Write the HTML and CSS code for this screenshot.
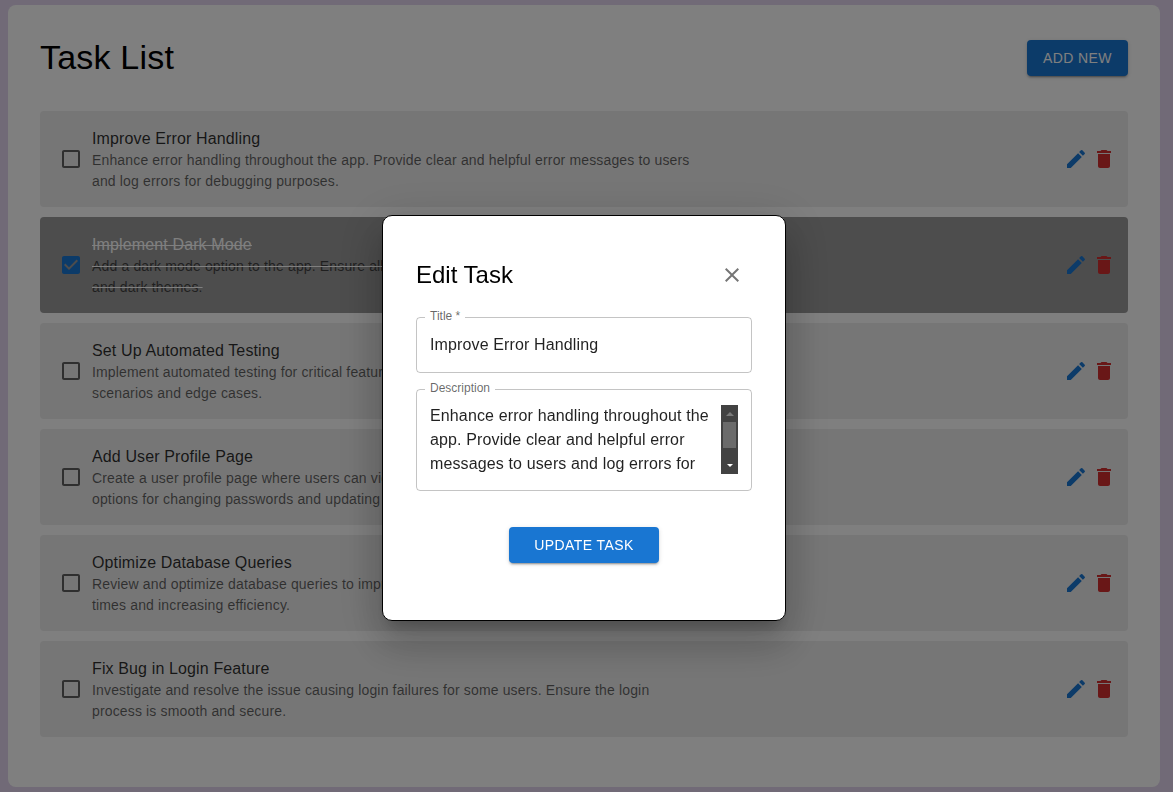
FILE: index.html
```html
<!DOCTYPE html>
<html lang="en">
<head>
<meta charset="utf-8">
<title>Task List</title>
<link rel="stylesheet" href="styles.css">
</head>
<body>
<main class="card">
  <header class="page-header">
    <h1 class="page-title">Task List</h1>
    <button class="btn btn-add" type="button">ADD NEW</button>
  </header>
  <ul class="task-list">
    <li class="task">
      <svg class="icon check" viewBox="0 0 24 24"><path d="M19 5v14H5V5h14m0-2H5c-1.1 0-2 .9-2 2v14c0 1.1.9 2 2 2h14c1.1 0 2-.9 2-2V5c0-1.1-.9-2-2-2z"/></svg>
      <div class="task-text">
        <div class="task-title">Improve Error Handling</div>
        <p class="task-desc">Enhance error handling throughout the app. Provide clear and helpful error messages to users and log errors for debugging purposes.</p>
      </div>
      <div class="task-actions">
        <svg class="icon edit" viewBox="0 0 24 24"><path d="M3 17.25V21h3.75L17.81 9.94l-3.75-3.75L3 17.25zM20.71 7.04c.39-.39.39-1.02 0-1.41l-2.34-2.34a.9959.9959 0 0 0-1.41 0l-1.83 1.83 3.75 3.75 1.83-1.83z"/></svg>
        <svg class="icon del" viewBox="0 0 24 24"><path d="M6 19c0 1.1.9 2 2 2h8c1.1 0 2-.9 2-2V7H6v12zM19 4h-3.5l-1-1h-5l-1 1H5v2h14V4z"/></svg>
      </div>
    </li>
    <li class="task task-done">
      <svg class="icon check check-on" viewBox="0 0 24 24"><path d="M19 3H5c-1.11 0-2 .9-2 2v14c0 1.1.89 2 2 2h14c1.11 0 2-.89 2-2V5c0-1.1-.89-2-2-2zm-9 14l-5-5 1.41-1.41L10 14.17l7.59-7.59L19 8l-9 9z"/></svg>
      <div class="task-text">
        <div class="task-title">Implement Dark Mode</div>
        <p class="task-desc">Add a dark mode option to the app. Ensure all components and pages are styled for both light and dark themes.</p>
      </div>
      <div class="task-actions">
        <svg class="icon edit" viewBox="0 0 24 24"><path d="M3 17.25V21h3.75L17.81 9.94l-3.75-3.75L3 17.25zM20.71 7.04c.39-.39.39-1.02 0-1.41l-2.34-2.34a.9959.9959 0 0 0-1.41 0l-1.83 1.83 3.75 3.75 1.83-1.83z"/></svg>
        <svg class="icon del" viewBox="0 0 24 24"><path d="M6 19c0 1.1.9 2 2 2h8c1.1 0 2-.9 2-2V7H6v12zM19 4h-3.5l-1-1h-5l-1 1H5v2h14V4z"/></svg>
      </div>
    </li>
    <li class="task">
      <svg class="icon check" viewBox="0 0 24 24"><path d="M19 5v14H5V5h14m0-2H5c-1.1 0-2 .9-2 2v14c0 1.1.9 2 2 2h14c1.1 0 2-.9 2-2V5c0-1.1-.9-2-2-2z"/></svg>
      <div class="task-text">
        <div class="task-title">Set Up Automated Testing</div>
        <p class="task-desc">Implement automated testing for critical features of the application, covering common user scenarios and edge cases.</p>
      </div>
      <div class="task-actions">
        <svg class="icon edit" viewBox="0 0 24 24"><path d="M3 17.25V21h3.75L17.81 9.94l-3.75-3.75L3 17.25zM20.71 7.04c.39-.39.39-1.02 0-1.41l-2.34-2.34a.9959.9959 0 0 0-1.41 0l-1.83 1.83 3.75 3.75 1.83-1.83z"/></svg>
        <svg class="icon del" viewBox="0 0 24 24"><path d="M6 19c0 1.1.9 2 2 2h8c1.1 0 2-.9 2-2V7H6v12zM19 4h-3.5l-1-1h-5l-1 1H5v2h14V4z"/></svg>
      </div>
    </li>
    <li class="task">
      <svg class="icon check" viewBox="0 0 24 24"><path d="M19 5v14H5V5h14m0-2H5c-1.1 0-2 .9-2 2v14c0 1.1.9 2 2 2h14c1.1 0 2-.9 2-2V5c0-1.1-.9-2-2-2z"/></svg>
      <div class="task-text">
        <div class="task-title">Add User Profile Page</div>
        <p class="task-desc">Create a user profile page where users can view and edit their personal information. Include options for changing passwords and updating profile pictures.</p>
      </div>
      <div class="task-actions">
        <svg class="icon edit" viewBox="0 0 24 24"><path d="M3 17.25V21h3.75L17.81 9.94l-3.75-3.75L3 17.25zM20.71 7.04c.39-.39.39-1.02 0-1.41l-2.34-2.34a.9959.9959 0 0 0-1.41 0l-1.83 1.83 3.75 3.75 1.83-1.83z"/></svg>
        <svg class="icon del" viewBox="0 0 24 24"><path d="M6 19c0 1.1.9 2 2 2h8c1.1 0 2-.9 2-2V7H6v12zM19 4h-3.5l-1-1h-5l-1 1H5v2h14V4z"/></svg>
      </div>
    </li>
    <li class="task">
      <svg class="icon check" viewBox="0 0 24 24"><path d="M19 5v14H5V5h14m0-2H5c-1.1 0-2 .9-2 2v14c0 1.1.9 2 2 2h14c1.1 0 2-.9 2-2V5c0-1.1-.9-2-2-2z"/></svg>
      <div class="task-text">
        <div class="task-title">Optimize Database Queries</div>
        <p class="task-desc">Review and optimize database queries to improve application performance, reducing load times and increasing efficiency.</p>
      </div>
      <div class="task-actions">
        <svg class="icon edit" viewBox="0 0 24 24"><path d="M3 17.25V21h3.75L17.81 9.94l-3.75-3.75L3 17.25zM20.71 7.04c.39-.39.39-1.02 0-1.41l-2.34-2.34a.9959.9959 0 0 0-1.41 0l-1.83 1.83 3.75 3.75 1.83-1.83z"/></svg>
        <svg class="icon del" viewBox="0 0 24 24"><path d="M6 19c0 1.1.9 2 2 2h8c1.1 0 2-.9 2-2V7H6v12zM19 4h-3.5l-1-1h-5l-1 1H5v2h14V4z"/></svg>
      </div>
    </li>
    <li class="task">
      <svg class="icon check" viewBox="0 0 24 24"><path d="M19 5v14H5V5h14m0-2H5c-1.1 0-2 .9-2 2v14c0 1.1.9 2 2 2h14c1.1 0 2-.9 2-2V5c0-1.1-.9-2-2-2z"/></svg>
      <div class="task-text">
        <div class="task-title">Fix Bug in Login Feature</div>
        <p class="task-desc">Investigate and resolve the issue causing login failures for some users. Ensure the login process is smooth and secure.</p>
      </div>
      <div class="task-actions">
        <svg class="icon edit" viewBox="0 0 24 24"><path d="M3 17.25V21h3.75L17.81 9.94l-3.75-3.75L3 17.25zM20.71 7.04c.39-.39.39-1.02 0-1.41l-2.34-2.34a.9959.9959 0 0 0-1.41 0l-1.83 1.83 3.75 3.75 1.83-1.83z"/></svg>
        <svg class="icon del" viewBox="0 0 24 24"><path d="M6 19c0 1.1.9 2 2 2h8c1.1 0 2-.9 2-2V7H6v12zM19 4h-3.5l-1-1h-5l-1 1H5v2h14V4z"/></svg>
      </div>
    </li>
  </ul>
</main>

<div class="overlay">
  <section class="modal">
    <div class="modal-header">
      <h2 class="modal-title">Edit Task</h2>
      <svg class="icon close" viewBox="0 0 24 24"><path d="M19 6.41 17.59 5 12 10.59 6.41 5 5 6.41 10.59 12 5 17.59 6.41 19 12 13.41 17.59 19 19 17.59 13.41 12 19 6.41z"/></svg>
    </div>
    <div class="field field-title">
      <span class="field-label">Title *</span>
      <div class="field-value">Improve Error Handling</div>
    </div>
    <div class="field field-desc">
      <span class="field-label">Description</span>
      <div class="field-value field-multiline">Enhance error handling throughout the app. Provide clear and helpful error messages to users and log errors for debugging purposes.</div>
      <div class="scrollbar">
        <span class="arrow arrow-up"></span>
        <span class="thumb"></span>
        <span class="arrow arrow-down"></span>
      </div>
    </div>
    <div class="modal-actions">
      <button class="btn btn-update" type="button">UPDATE TASK</button>
    </div>
  </section>
</div>
</body>
</html>
```

FILE: styles.css
```css
* { box-sizing: border-box; }

html, body { height: 100%; }

body {
  margin: 0;
  padding: 5px 13px 5px 8px;
  background: #e2d5ee;
  font-family: "Liberation Sans", Arial, sans-serif;
  color: #000;
  overflow: hidden;
}

.card {
  height: 782px;
  padding: 32px;
  background: #fff;
  border-radius: 8px;
}

.page-header {
  display: flex;
  justify-content: space-between;
  align-items: center;
  margin-bottom: 32px;
}

.page-title {
  margin: 0;
  padding-bottom: 2px;
  font-size: 34px;
  font-weight: 400;
  line-height: 40px;
  letter-spacing: 0.2px;
}

.btn {
  display: block;
  height: 36px;
  border: 0;
  border-radius: 4px;
  background: #1976d2;
  color: #fff;
  font-family: inherit;
  font-size: 14px;
  font-weight: 400;
  letter-spacing: 0.4px;
  box-shadow: 0 3px 1px -2px rgba(0,0,0,.2), 0 2px 2px 0 rgba(0,0,0,.14), 0 1px 5px 0 rgba(0,0,0,.12);
}

.btn-add { width: 101px; padding: 0; }
.btn-update { width: 150px; padding: 0; }

.task-list {
  display: flex;
  flex-direction: column;
  gap: 10px;
  margin: 0;
  padding: 0;
  list-style: none;
}

.task {
  display: flex;
  align-items: center;
  height: 96px;
  padding: 0 12px 0 19px;
  background: #ececec;
  border-radius: 4px;
}

.task-done {
  background: #9a9a9a;
}

.icon {
  display: block;
  flex: none;
  width: 24px;
  height: 24px;
  fill: currentColor;
}

.check { color: rgba(0,0,0,.6); margin-right: 9px; }
.check-on { color: #1976d2; }

.task-text { flex: 1; min-width: 0; }

.task-title {
  margin-bottom: -2px;
  font-size: 16px;
  line-height: 26px;
  letter-spacing: 0.13px;
  color: rgba(0,0,0,.82);
}

.task-desc {
  max-width: 600px;
  margin: 0;
  font-size: 14px;
  line-height: 21px;
  letter-spacing: 0.15px;
  color: rgba(0,0,0,.6);
}

.task-done .task-text {
  color: #fff;
  text-decoration: line-through;
}

.task-done .task-title { color: #fff; }

.task-actions {
  display: flex;
  gap: 4px;
}

.edit { color: #1976d2; }
.del { color: #d32f2f; }

.overlay {
  position: fixed;
  inset: 0;
  padding: 215px 0 0 382px;
  background: rgba(0,0,0,.5);
}

.modal {
  width: 404px;
  height: 406px;
  padding: 33px 33px 0 33px;
  background: #fff;
  border: 1px solid #000;
  border-radius: 10px;
  box-shadow: 0 11px 15px -7px rgba(0,0,0,.2), 0 24px 38px 3px rgba(0,0,0,.14), 0 9px 46px 8px rgba(0,0,0,.12);
}

.modal-header {
  display: flex;
  justify-content: space-between;
  align-items: center;
  height: 52px;
  margin-bottom: 16px;
}

.modal-title {
  margin: 0;
  font-size: 24px;
  font-weight: 400;
  line-height: 32px;
}

.close {
  margin-right: 8px;
  color: rgba(0,0,0,.54);
}

.field {
  position: relative;
  border: 1px solid rgba(0,0,0,.23);
  border-radius: 4px;
  padding: 0 13px;
}

.field-title {
  height: 56px;
  margin-bottom: 16px;
}

.field-desc {
  height: 102px;
}

.field-label {
  position: absolute;
  top: -9px;
  left: 8px;
  padding: 0 5px;
  background: #fff;
  font-size: 12px;
  line-height: 14px;
  color: rgba(0,0,0,.6);
}

.field-value {
  font-size: 16px;
  line-height: 24px;
  letter-spacing: 0.13px;
  color: rgba(0,0,0,.87);
}

.field-title .field-value { padding-top: 15px; }

.field-multiline {
  width: 284px;
  height: 72px;
  margin-top: 14px;
  overflow: hidden;
}

.scrollbar {
  position: absolute;
  top: 15px;
  left: 304px;
  display: flex;
  flex-direction: column;
  align-items: center;
  width: 17px;
  height: 69px;
  background: #424242;
}

.thumb {
  display: block;
  flex: none;
  width: 13px;
  height: 26px;
  margin-top: 6px;
  background: #6b6b6b;
}

.arrow {
  display: block;
  flex: none;
  width: 0;
  height: 0;
}

.arrow-up {
  margin-top: 7px;
  border-left: 4px solid transparent;
  border-right: 4px solid transparent;
  border-bottom: 4px solid #7a7a7a;
}

.arrow-down {
  margin-top: 16px;
  border-left: 3px solid transparent;
  border-right: 3px solid transparent;
  border-top: 3px solid #fff;
}

.modal-actions {
  display: flex;
  justify-content: center;
  margin-top: 36px;
}
```
